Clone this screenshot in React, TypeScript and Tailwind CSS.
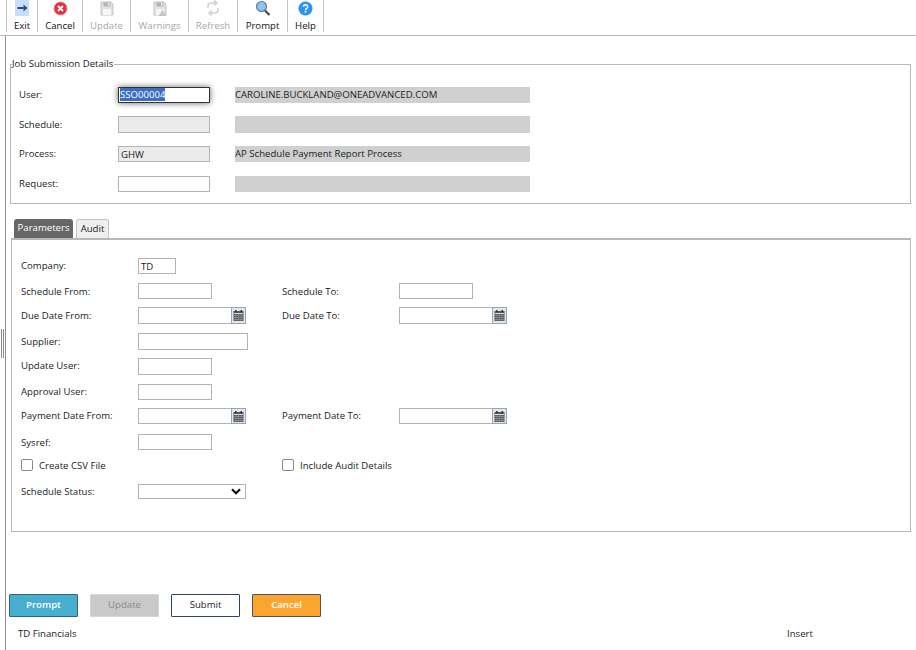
import React from "react";

const ToolBtn = ({ w, label, disabled, children }: { w: string; label: string; disabled?: boolean; children: React.ReactNode }) => (
  <div className={`${w} h-[32px] border-r border-[#c4c4c4] flex flex-col items-center shrink-0`}>
    <div className="h-[17px] w-full flex items-center justify-center">{children}</div>
    <span className={`text-[9.6px] leading-[13px] mt-[3px] whitespace-nowrap ${disabled ? "text-[#a8a8a8]" : "text-[#111]"}`}>{label}</span>
  </div>
);

const Floppy = ({ warn }: { warn?: boolean }) => (
  <svg width="14" height="15" viewBox="0 0 14 15">
    <path d="M1 1h10l2 2v11H1z" fill="#e2e2e2" stroke="#c4c4c4" />
    <rect x="3.5" y="1.5" width="7" height="4" fill="#b4b4b4" />
    <rect x="8" y="2" width="1.5" height="2.6" fill="#eee" />
    <rect x="3" y="8" width="8" height="6" fill="#f6f6f6" />
    {warn && <path d="M9.5 9l4 6h-8z" fill="#c4c4c4" />}
  </svg>
);

const Calendar = () => (
  <svg width="11" height="11" viewBox="0 0 11 11">
    <rect x="0.5" y="1" width="10" height="10" fill="#555" />
    <rect x="2" y="0" width="1.5" height="2" fill="#333" />
    <rect x="7.5" y="0" width="1.5" height="2" fill="#333" />
    <rect x="1" y="3" width="9" height="1" fill="#ddd" />
    <path d="M1 5.5h9M1 7.5h9M1 9.5h9" stroke="#9a9a9a" strokeWidth="0.7" />
    <path d="M3 4v7M5.5 4v7M8 4v7" stroke="#9a9a9a" strokeWidth="0.6" />
  </svg>
);

const Label = ({ w, children }: { w: string; children: React.ReactNode }) => (
  <span className={`${w} shrink-0 text-[9.6px] leading-[14px] text-[#222] whitespace-nowrap`}>{children}</span>
);

const Input = ({ w, value, grey }: { w: string; value?: string; grey?: boolean }) => (
  <div className={`${w} h-full shrink-0 border border-[#b3b3b3] ${grey ? "bg-[#ebebeb]" : "bg-white"} px-[2px] text-[9.6px] leading-[15px] text-[#222]`}>{value}</div>
);

const DateInput = () => (
  <div className="flex shrink-0 h-full">
    <div className="w-[94px] border border-[#b3b3b3] bg-white" />
    <div className="w-[15px] -ml-px border border-[#8fa5c4] bg-[#e6e6e6] flex items-center justify-center">
      <Calendar />
    </div>
  </div>
);

const Row = ({ cls, children }: { cls: string; children: React.ReactNode }) => (
  <div className={`${cls} flex items-center`}>{children}</div>
);

const Desc = ({ children }: { children?: React.ReactNode }) => (
  <div className="ml-[25px] w-[295px] h-full bg-[#d0d0d0] text-[9.6px] leading-[15px] text-[#222]">{children}</div>
);

const ActionBtn = ({ cls, label }: { cls: string; label: string }) => (
  <div className={`w-[69px] h-[23px] border rounded-[1px] flex items-center justify-center text-[9.6px] ${cls}`}>{label}</div>
);

export default function App() {
  return (
    <div className="w-[916px] h-[650px] overflow-hidden bg-white flex flex-col font-['Open_Sans',sans-serif]">
      <div className="h-[36px] shrink-0 border-b border-[#b8b8b8] flex pl-[6px]">
        <div className="w-px h-[32px] bg-[#c4c4c4]" />
        <ToolBtn w="w-[31px]" label="Exit">
          <svg width="14" height="16" viewBox="0 0 14 16">
            <rect width="14" height="16" fill="#c9dff5" />
            <path d="M2.5 8h7" stroke="#34468f" strokeWidth="2" />
            <path d="M8.5 4.5l4 3.5-4 3.5z" fill="#34468f" />
          </svg>
        </ToolBtn>
        <ToolBtn w="w-[45px]" label="Cancel">
          <svg width="15" height="15" viewBox="0 0 15 15">
            <circle cx="7.5" cy="7.5" r="6.5" fill="#e8303a" stroke="#d9858a" />
            <path d="M5 5l5 5M10 5l-5 5" stroke="#fff" strokeWidth="1.8" />
          </svg>
        </ToolBtn>
        <ToolBtn w="w-[48px]" label="Update" disabled><Floppy /></ToolBtn>
        <ToolBtn w="w-[58px]" label="Warnings" disabled><Floppy warn /></ToolBtn>
        <ToolBtn w="w-[49px]" label="Refresh" disabled>
          <svg width="14" height="16" viewBox="0 0 14 16" fill="none" stroke="#cfcfcf" strokeWidth="1.5">
            <path d="M2 8V6a3 3 0 0 1 3-3h5" />
            <path d="M8 0.5L11 3 8 5.5" />
            <path d="M12 8v2a3 3 0 0 1-3 3H4" />
            <path d="M6 10.5L3 13l3 2.5" />
          </svg>
        </ToolBtn>
        <ToolBtn w="w-[50px]" label="Prompt">
          <svg width="16" height="16" viewBox="0 0 16 16">
            <path d="M9.5 10l5 5" stroke="#4a4a4a" strokeWidth="2.2" />
            <circle cx="6.5" cy="6.5" r="5" fill="#8fc4ee" stroke="#5a7f9c" strokeWidth="1.2" />
          </svg>
        </ToolBtn>
        <ToolBtn w="w-[36px]" label="Help">
          <svg width="15" height="15" viewBox="0 0 15 15">
            <circle cx="7.5" cy="7.5" r="7" fill="#2b94ee" />
            <path d="M5.4 5.8a2.1 2.1 0 1 1 3.3 1.7c-.8.5-1.2.9-1.2 1.7" fill="none" stroke="#fff" strokeWidth="1.5" />
            <rect x="6.7" y="10" width="1.6" height="1.6" fill="#fff" />
          </svg>
        </ToolBtn>
      </div>

      <div className="flex-1 flex min-h-0">
        <div className="w-[6px] shrink-0 border-r border-[#8f8f8f] flex items-center">
          <div className="ml-[1px] w-[3px] h-[29px] border-x border-[#8a8a8a]" />
        </div>

        <div className="flex-1 flex flex-col min-w-0 pl-[4px] pr-[5px]">
          <fieldset className="mt-[21px] h-[147px] border border-[#b8b8b8] pl-[8px]">
            <legend className="ml-[-7px] text-[9.6px] leading-[14px] text-[#222] pr-[1px]">Job Submission Details</legend>
            <Row cls="mt-[16px] h-[16px]">
              <Label w="w-[99px]">User:</Label>
              <div className="w-[92px] h-[16px] shrink-0 border border-[#333] bg-white shadow-[0_0_6px_rgba(0,0,0,0.6)] pl-px text-[9.6px] leading-[14px]">
                <span className="bg-[#3b6fc4] text-white">SSO00004</span>
              </div>
              <Desc>CAROLINE.BUCKLAND@ONEADVANCED.COM</Desc>
            </Row>
            <Row cls="mt-[13px] h-[17px]"><Label w="w-[99px]">Schedule:</Label><Input w="w-[92px]" grey /><Desc /></Row>
            <Row cls="mt-[13px] h-[16px]"><Label w="w-[99px]">Process:</Label><Input w="w-[92px]" value="GHW" grey /><Desc>AP Schedule Payment Report Process</Desc></Row>
            <Row cls="mt-[14px] h-[16px]"><Label w="w-[99px]">Request:</Label><Input w="w-[92px]" /><Desc /></Row>
          </fieldset>

          <div className="mt-[14px] ml-[4px] h-[20px] flex items-end gap-[3px]">
            <div className="w-[59px] h-[19px] rounded-t-[3px] bg-[#666] text-white text-[9.6px] font-medium flex items-center justify-center">Parameters</div>
            <div className="w-[33px] h-[19px] rounded-t-[3px] border border-b-0 border-[#c4c4c4] bg-[#efefef] text-[#222] text-[9.6px] flex items-center justify-center">Audit</div>
          </div>

          <div className="ml-px h-[294px] border border-t-2 border-[#b8b8b8] pl-[9px] pt-[18px]">
            <Row cls="h-[16px]"><Label w="w-[117px]">Company:</Label><Input w="w-[38px]" value="TD" /></Row>
            <Row cls="mt-[9px] h-[16px]">
              <Label w="w-[117px] pt-[2px]">Schedule From:</Label><Input w="w-[74px]" />
              <span className="w-[70px]" /><Label w="w-[117px] pt-[2px]">Schedule To:</Label><Input w="w-[74px]" />
            </Row>
            <Row cls="mt-[8px] h-[17px]">
              <Label w="w-[117px]">Due Date From:</Label><DateInput />
              <span className="w-[36px]" /><Label w="w-[117px]">Due Date To:</Label><DateInput />
            </Row>
            <Row cls="mt-[9px] h-[17px]"><Label w="w-[117px]">Supplier:</Label><Input w="w-[110px]" /></Row>
            <Row cls="mt-[8px] h-[17px]"><Label w="w-[117px] pb-[2px]">Update User:</Label><Input w="w-[74px]" /></Row>
            <Row cls="mt-[9px] h-[16px]"><Label w="w-[117px]">Approval User:</Label><Input w="w-[74px]" /></Row>
            <Row cls="mt-[8px] h-[16px]">
              <Label w="w-[117px]">Payment Date From:</Label><DateInput />
              <span className="w-[36px]" /><Label w="w-[117px]">Payment Date To:</Label><DateInput />
            </Row>
            <Row cls="mt-[10px] h-[16px]"><Label w="w-[117px] pt-[2px]">Sysref:</Label><Input w="w-[74px]" /></Row>
            <Row cls="mt-[9px] h-[12px]">
              <div className="w-[261px] flex items-center">
                <div className="w-[12px] h-[12px] rounded-[2px] border border-[#8a8a8a] bg-white mr-[6px]" />
                <Label w="w-auto pt-[2px]">Create CSV File</Label>
              </div>
              <div className="w-[12px] h-[12px] rounded-[2px] border border-[#8a8a8a] bg-white mr-[6px]" />
              <Label w="w-auto pt-[2px]">Include Audit Details</Label>
            </Row>
            <Row cls="mt-[13px] h-[15px]">
              <Label w="w-[117px]">Schedule Status:</Label>
              <div className="w-[108px] h-full border border-[#b3b3b3] bg-white flex items-center justify-end pr-[4px]">
                <svg width="10" height="7" viewBox="0 0 10 7"><path d="M1 1.2l4 4 4-4" fill="none" stroke="#111" strokeWidth="2.2" /></svg>
              </div>
            </Row>
          </div>

          <div className="mt-[62px] flex gap-[12px] -ml-px">
            <ActionBtn cls="bg-[#46aecf] border-[#3d5f78] text-white font-semibold" label="Prompt" />
            <ActionBtn cls="bg-[#c9c9c9] border-[#d4d4e0] text-[#8a8a8a] font-medium" label="Update" />
            <ActionBtn cls="bg-white border-[#2f4468] text-[#222] font-medium" label="Submit" />
            <ActionBtn cls="bg-[#fba52e] border-[#4a5568] text-white font-semibold" label="Cancel" />
          </div>

          <div className="mt-[10px] flex text-[9.6px] leading-[14px] text-[#222]">
            <span className="ml-[8px] w-[769px]">TD Financials</span>
            <span>Insert</span>
          </div>
        </div>
      </div>
    </div>
  );
}
